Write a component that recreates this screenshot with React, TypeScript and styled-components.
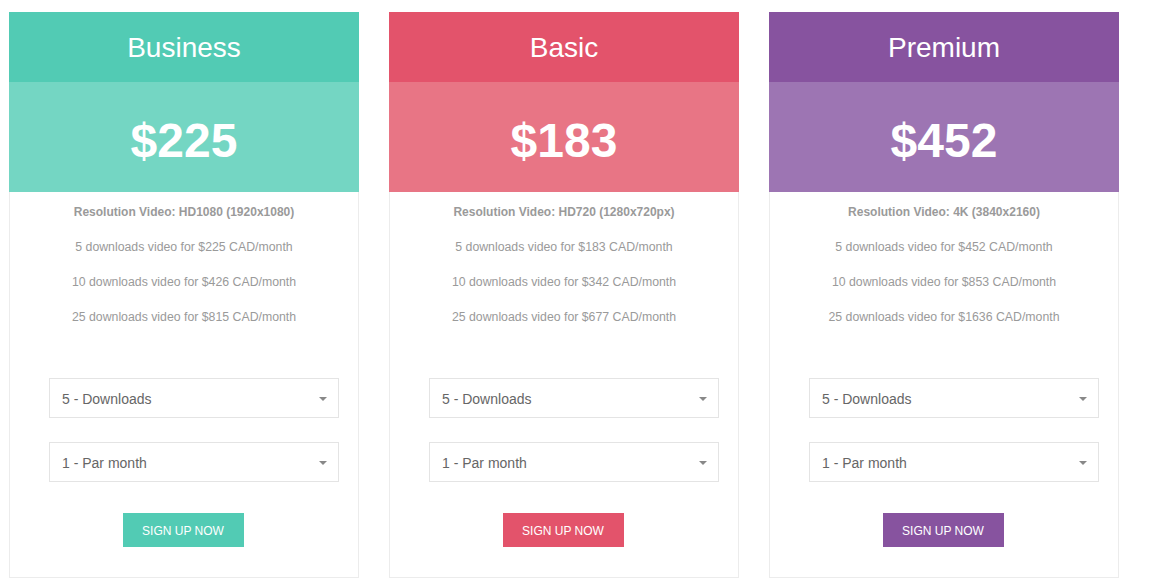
import React from "react";
import styled, { createGlobalStyle } from "styled-components";

const GlobalStyle = createGlobalStyle`
  html, body {
    margin: 0;
    padding: 0;
    background: #ffffff;
    font-family: "Liberation Sans", Arial, sans-serif;
  }
  * { box-sizing: border-box; }
`;

type Plan = {
  name: string;
  price: string;
  main: string;
  light: string;
  resolution: string;
  lines: string[];
};

const plans: Plan[] = [
  {
    name: "Business",
    price: "$225",
    main: "#52cbb4",
    light: "#74d6c3",
    resolution: "Resolution Video: HD1080 (1920x1080)",
    lines: [
      "5 downloads video for $225 CAD/month",
      "10 downloads video for $426 CAD/month",
      "25 downloads video for $815 CAD/month",
    ],
  },
  {
    name: "Basic",
    price: "$183",
    main: "#e3536b",
    light: "#e87585",
    resolution: "Resolution Video: HD720 (1280x720px)",
    lines: [
      "5 downloads video for $183 CAD/month",
      "10 downloads video for $342 CAD/month",
      "25 downloads video for $677 CAD/month",
    ],
  },
  {
    name: "Premium",
    price: "$452",
    main: "#87539f",
    light: "#9d75b3",
    resolution: "Resolution Video: 4K (3840x2160)",
    lines: [
      "5 downloads video for $452 CAD/month",
      "10 downloads video for $853 CAD/month",
      "25 downloads video for $1636 CAD/month",
    ],
  },
];

const Page = styled.div`
  display: flex;
  gap: 30px;
  padding: 12px 0 0 9px;
`;

const Card = styled.div`
  width: 350px;
  display: flex;
  flex-direction: column;
`;

const Header = styled.div<{ $bg: string }>`
  height: 70px;
  background: ${(p) => p.$bg};
  color: #ffffff;
  font-size: 28px;
  display: flex;
  align-items: center;
  justify-content: center;
  padding-top: 1px;
`;

const PriceBand = styled.div<{ $bg: string }>`
  height: 110px;
  background: ${(p) => p.$bg};
  color: #ffffff;
  font-size: 48px;
  font-weight: bold;
  display: flex;
  align-items: center;
  justify-content: center;
  padding-top: 6px;
`;

const Body = styled.div`
  border: 1px solid #ececec;
  border-top: none;
  padding: 3px 0 30px;
  display: flex;
  flex-direction: column;
  align-items: center;
  height: 386px;
`;

const Features = styled.ul`
  list-style: none;
  margin: 0;
  padding: 0;
  width: 100%;
`;

const Feature = styled.li<{ $strong?: boolean }>`
  height: 35px;
  line-height: 35px;
  text-align: center;
  font-size: ${(p) => (p.$strong ? "12px" : "12.3px")};
  color: #9a9a9a;
  font-weight: ${(p) => (p.$strong ? "bold" : "normal")};
`;

const Selects = styled.div`
  align-self: flex-start;
  margin: 43px 0 0 39px;
  display: flex;
  flex-direction: column;
  gap: 24px;
`;

const SelectWrap = styled.div`
  position: relative;
  width: 290px;
  height: 40px;
`;

const Select = styled.select`
  appearance: none;
  -webkit-appearance: none;
  width: 100%;
  height: 100%;
  border: 1px solid #e4e4e4;
  border-radius: 0;
  background: #ffffff;
  padding: 2px 30px 0 12px;
  font-family: "Liberation Sans", Arial, sans-serif;
  font-size: 14px;
  color: #666666;
  outline: none;
`;

const Caret = styled.span`
  position: absolute;
  right: 12px;
  top: 19px;
  width: 0;
  height: 0;
  border-left: 4px solid transparent;
  border-right: 4px solid transparent;
  border-top: 4px solid #888888;
  pointer-events: none;
`;

const Button = styled.button<{ $bg: string }>`
  margin-top: 31px;
  margin-right: 2px;
  width: 121px;
  height: 35px;
  border: none;
  border-radius: 0;
  background: ${(p) => p.$bg};
  color: #ffffff;
  font-family: "Liberation Sans", Arial, sans-serif;
  font-size: 12px;
  text-transform: uppercase;
  padding: 1px 0 0;
  cursor: pointer;
`;

const Dropdown: React.FC<{ options: string[] }> = ({ options }) => (
  <SelectWrap>
    <Select defaultValue={options[0]}>
      {options.map((o) => (
        <option key={o}>{o}</option>
      ))}
    </Select>
    <Caret />
  </SelectWrap>
);

export default function App() {
  return (
    <>
      <GlobalStyle />
      <Page>
        {plans.map((plan) => (
          <Card key={plan.name}>
            <Header $bg={plan.main}>{plan.name}</Header>
            <PriceBand $bg={plan.light}>{plan.price}</PriceBand>
            <Body>
              <Features>
                <Feature $strong>{plan.resolution}</Feature>
                {plan.lines.map((l) => (
                  <Feature key={l}>{l}</Feature>
                ))}
              </Features>
              <Selects>
                <Dropdown options={["5 - Downloads", "10 - Downloads", "25 - Downloads"]} />
                <Dropdown options={["1 - Par month", "3 - Par month", "12 - Par month"]} />
              </Selects>
              <Button $bg={plan.main}>Sign up now</Button>
            </Body>
          </Card>
        ))}
      </Page>
    </>
  );
}
